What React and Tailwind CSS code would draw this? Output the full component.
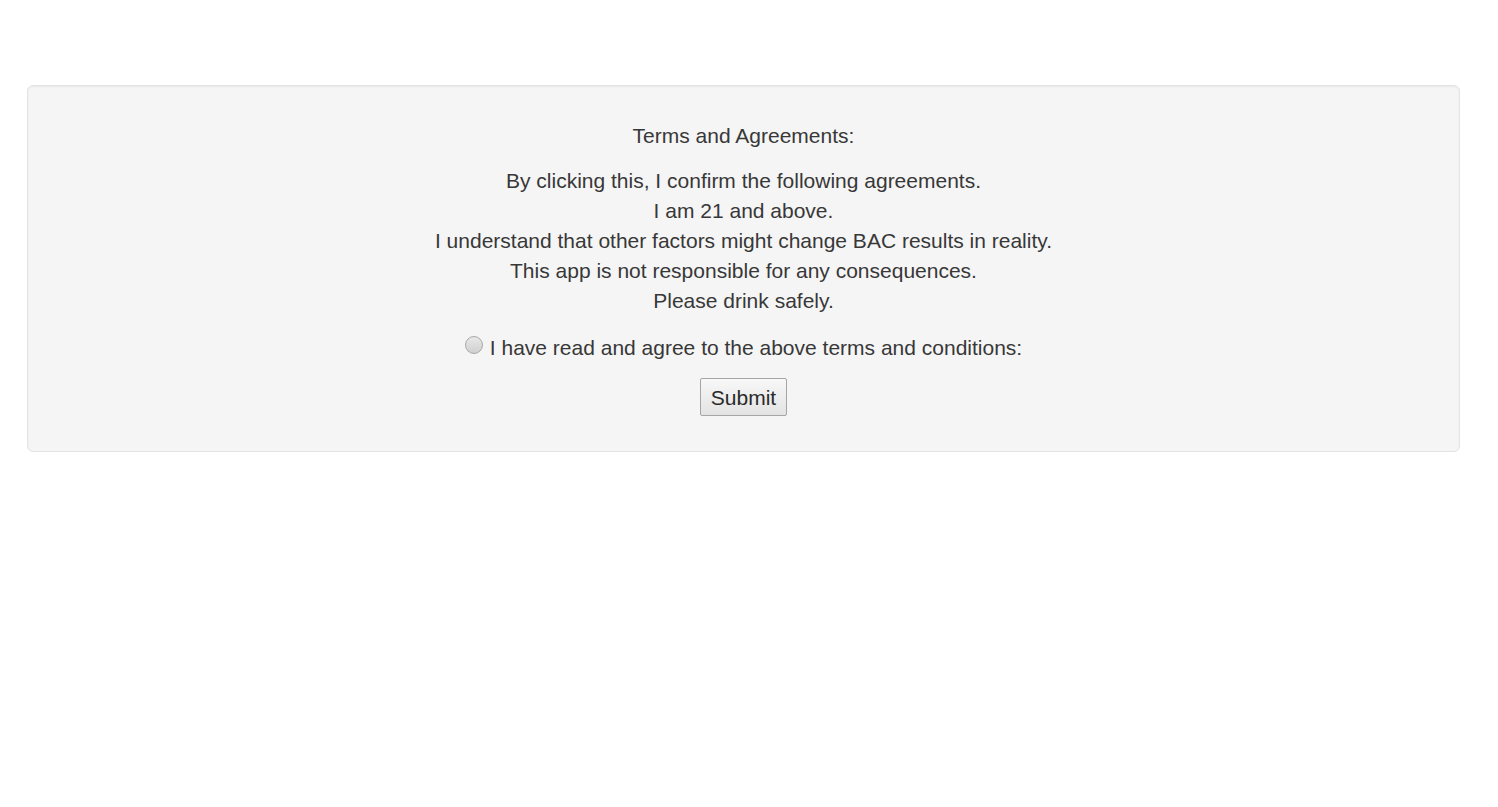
export default function App() {
  return (
    <div className="min-h-[807px] bg-white pt-[85px] px-[27px] pr-[38px]" style={{ fontFamily: '"Liberation Sans", Arial, sans-serif' }}>
      <div className="border border-[#e3e3e3] bg-[#f5f5f5] rounded-[6px] shadow-[inset_0_1px_2px_rgba(0,0,0,0.05)] pt-[35px] pb-[35px] text-center text-[#383838] text-[21px] leading-[30px]">
        <div>Terms and Agreements:</div>
        <div className="mt-[15px]">
          <div>By clicking this, I confirm the following agreements.</div>
          <div>I am 21 and above.</div>
          <div>I understand that other factors might change BAC results in reality.</div>
          <div>This app is not responsible for any consequences.</div>
          <div>Please drink safely.</div>
        </div>
        <div className="mt-[17px] flex items-center justify-center gap-[7px]">
          <span className="inline-block w-[18px] h-[18px] rounded-full border border-[#a9a9a9] bg-gradient-to-b from-[#e8e8e8] to-[#d0d0d0] -mt-[6px]"></span>
          <span>I have read and agree to the above terms and conditions:</span>
        </div>
        <div className="mt-[15px] flex justify-center">
          <button className="h-[38px] px-[10px] border border-[#a5a5a5] rounded-[2px] bg-gradient-to-b from-[#f8f8f8] to-[#e3e3e3] text-[21px] text-[#2a2a2a] leading-none" style={{ fontFamily: '"Liberation Sans", Arial, sans-serif' }}>
            Submit
          </button>
        </div>
      </div>
    </div>
  );
}
